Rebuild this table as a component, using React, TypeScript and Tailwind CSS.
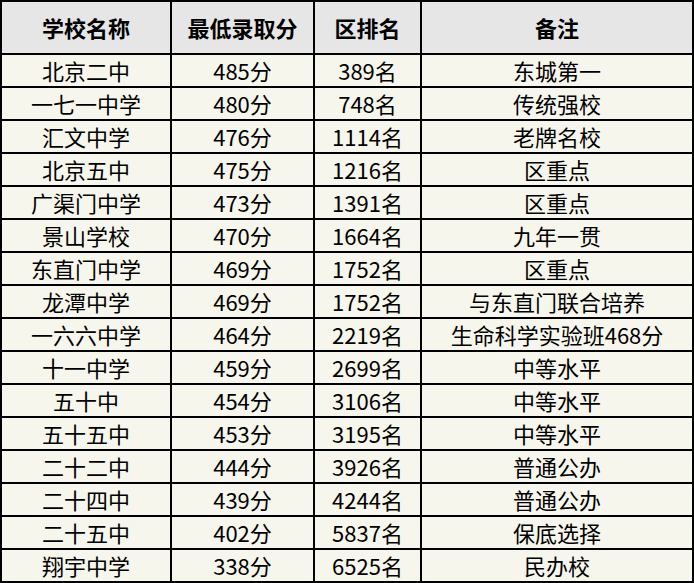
import React from "react";

const rows: [string, string, string, string][] = [
  ["北京二中", "485分", "389名", "东城第一"],
  ["一七一中学", "480分", "748名", "传统强校"],
  ["汇文中学", "476分", "1114名", "老牌名校"],
  ["北京五中", "475分", "1216名", "区重点"],
  ["广渠门中学", "473分", "1391名", "区重点"],
  ["景山学校", "470分", "1664名", "九年一贯"],
  ["东直门中学", "469分", "1752名", "区重点"],
  ["龙潭中学", "469分", "1752名", "与东直门联合培养"],
  ["一六六中学", "464分", "2219名", "生命科学实验班468分"],
  ["十一中学", "459分", "2699名", "中等水平"],
  ["五十中", "454分", "3106名", "中等水平"],
  ["五十五中", "453分", "3195名", "中等水平"],
  ["二十二中", "444分", "3926名", "普通公办"],
  ["二十四中", "439分", "4244名", "普通公办"],
  ["二十五中", "402分", "5837名", "保底选择"],
  ["翔宇中学", "338分", "6525名", "民办校"],
];

const headers = ["学校名称", "最低录取分", "区排名", "备注"];

export default function App() {
  return (
    <div
      className="w-[694px] h-[583px] bg-white"
      style={{ fontFamily: '"Noto Sans CJK SC", "Noto Sans", sans-serif' }}
    >
      <table className="w-[694px] table-fixed border-collapse border border-[#444] text-black">
        <colgroup>
          <col className="w-[170px]" />
          <col className="w-[143px]" />
          <col className="w-[107px]" />
          <col />
        </colgroup>
        <thead>
          <tr className="h-[53px] bg-[#e6e6e6]">
            {headers.map((h) => (
              <th
                key={h}
                className="border-2 border-black p-0 pb-[2px] text-[22px] font-bold leading-none text-center"
              >
                {h}
              </th>
            ))}
          </tr>
        </thead>
        <tbody>
          {rows.map((r, i) => (
            <tr key={i} className="h-[33px] bg-[#f6f6ec]">
              {r.map((c, j) => (
                <td
                  key={j}
                  className="border-2 border-black p-0 pb-[2px] text-[22px] leading-none text-center whitespace-nowrap"
                >
                  {c}
                </td>
              ))}
            </tr>
          ))}
        </tbody>
      </table>
    </div>
  );
}
